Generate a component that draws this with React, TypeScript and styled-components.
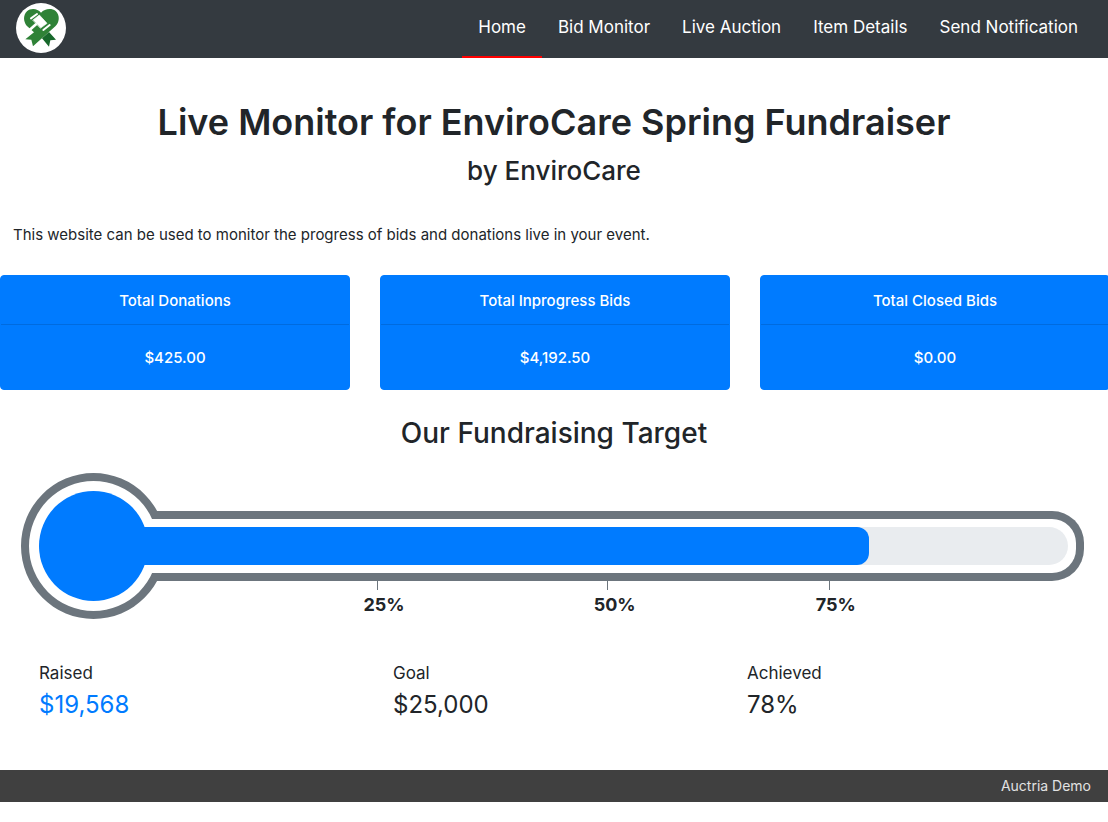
import React from 'react';
import styled, { createGlobalStyle } from 'styled-components';

const GlobalStyle = createGlobalStyle`
  *, *::before, *::after { box-sizing: border-box; }
  body {
    margin: 0;
    overflow-x: hidden;
    background: #fff;
    color: #212529;
    font-family: Inter, "Liberation Sans", sans-serif;
    font-size: 16px;
    line-height: 24px;
  }
  h1, h2, h3, p, dl, dt, dd { margin: 0; padding: 0; }
`;

const Header = styled.header`
  display: flex;
  align-items: stretch;
  justify-content: space-between;
  height: 58px;
  padding: 0 14px 0 16px;
  background: #343a40;
`;

const Brand = styled.a`
  display: block;
  padding-top: 3px;
  svg { display: block; }
`;

const Nav = styled.nav`
  display: flex;
`;

const NavLink = styled.a<{ $active?: boolean }>`
  padding: 15px 16px 0;
  border-bottom: 2px solid ${(p) => (p.$active ? '#f00' : 'transparent')};
  color: #fff;
  font-size: 17px;
  text-decoration: none;
  white-space: nowrap;
`;

const Title = styled.h1`
  margin-top: 40px;
  text-align: center;
  font-size: 36px;
  font-weight: 600;
  line-height: 48px;
`;

const Subtitle = styled.h2`
  margin-top: 8px;
  text-align: center;
  font-size: 26px;
  font-weight: 500;
  line-height: 34px;
`;

const Intro = styled.p`
  margin-top: 35px;
  padding: 0 13px;
  font-size: 15px;
`;

const Cards = styled.section`
  display: grid;
  grid-template-columns: repeat(3, 1fr);
  gap: 30px;
  margin: 28px -2px 0 0;
`;

const Card = styled.article`
  border: 1px solid #007bff;
  border-radius: 4px;
  background: #007bff;
  color: #fff;
  text-align: center;
  font-weight: 500;
`;

const CardHeader = styled.h3`
  padding: 13px 20px 11px;
  border-bottom: 1px solid rgba(0, 0, 0, 0.125);
  font-size: 15px;
  font-weight: 500;
`;

const CardBody = styled.p`
  padding: 21px 20px 19px;
  font-size: 15px;
`;

const TargetTitle = styled.h2`
  margin-top: 24px;
  text-align: center;
  font-size: 28px;
  font-weight: 500;
  line-height: 38px;
`;

const Thermometer = styled.section`
  padding: 21px 24px 0 21px;
`;

const Gauge = styled.div`
  display: flex;
  align-items: center;
`;

const Bulb = styled.div`
  flex: none;
  width: 145px;
  height: 146px;
  padding: 10px;
  border: 8px solid #6c757d;
  border-radius: 50%;
  background: #fff;
  &::before {
    content: '';
    display: block;
    height: 110px;
    border-radius: 50%;
    background: #007bff;
  }
`;

const Tube = styled.div`
  flex: 1;
  margin-left: -14px;
  padding: 8px 8px 8px 0;
  border: 8px solid #6c757d;
  border-left: 0;
  border-radius: 0 32px 32px 0;
  background: #fff;
`;

const Track = styled.div`
  height: 38px;
  border-radius: 0 19px 19px 0;
  background: #e9ecef;
`;

/* The left padding reaches back into the bulb so the liquid is continuous. */
const Fill = styled.div`
  box-sizing: content-box;
  height: 38px;
  margin-left: -12px;
  padding-left: 12px;
  border-radius: 0 12px 12px 0;
  background: #007bff;
`;

const Scale = styled.div`
  display: grid;
  grid-template-columns: 230fr 222fr 281fr;
  margin-top: -38px;
  padding-left: 31%;
`;

const Mark = styled.div`
  padding-left: 13px;
  font-size: 18px;
  font-weight: 700;
  line-height: 30px;
  &::before {
    content: '';
    display: block;
    width: 1px;
    height: 9px;
    margin-left: 13px;
    background: #6c757d;
  }
`;

const Stats = styled.dl`
  display: grid;
  grid-template-columns: repeat(3, 1fr);
  margin-top: 40px;
  padding: 0 7px 0 39px;
`;

const StatLabel = styled.dt`
  font-size: 17px;
  line-height: 26px;
`;

const StatValue = styled.dd<{ $accent?: boolean }>`
  color: ${(p) => (p.$accent ? '#007bff' : 'inherit')};
  font-size: 24px;
  line-height: 38px;
`;

const Footer = styled.footer`
  margin-top: 46px;
  padding: 0 17px;
  background: #404040;
  color: #e2e2e2;
  text-align: right;
  font-size: 14px;
  line-height: 32px;
`;

const Logo = () => (
  <svg width="50" height="50" viewBox="48 9 150 150" aria-hidden="true">
    <circle cx="123" cy="84" r="75" fill="#fff" />
    <path
      d="M123 38C112 24 91 24 81 34C69 46 70 64 80 77L102 97L76 118L94 119L99 139L166 79C178 68 181 46 167 33C154 23 134 26 123 38Z"
      fill="#2f8237"
    />
    <path d="M126 115L147 96L168 119L151 121L147 140Z" fill="#17682b" />
    <g fill="#fff" stroke="#fff" strokeLinecap="round" strokeLinejoin="round">
      <path d="M99 60L118 45L141 70L122 84Z" strokeWidth="2" />
      <path d="M108 73L76 101" strokeWidth="8" />
      <path d="M93 55L111 42" strokeWidth="6" />
      <path d="M130 90L149 75" strokeWidth="6" />
    </g>
  </svg>
);

const links = ['Home', 'Bid Monitor', 'Live Auction', 'Item Details', 'Send Notification'];

const totals = [
  { label: 'Total Donations', amount: '$425.00' },
  { label: 'Total Inprogress Bids', amount: '$4,192.50' },
  { label: 'Total Closed Bids', amount: '$0.00' },
];

const raised = 19568;
const goal = 25000;
const percent = (raised / goal) * 100;

export default function App() {
  return (
    <>
      <GlobalStyle />
      <Header>
        <Brand href="#" aria-label="EnviroCare">
          <Logo />
        </Brand>
        <Nav>
          {links.map((name, i) => (
            <NavLink key={name} href="#" $active={i === 0}>
              {name}
            </NavLink>
          ))}
        </Nav>
      </Header>
      <main>
        <Title>Live Monitor for EnviroCare Spring Fundraiser</Title>
        <Subtitle>by EnviroCare</Subtitle>
        <Intro>This website can be used to monitor the progress of bids and donations live in your event.</Intro>
        <Cards>
          {totals.map((t) => (
            <Card key={t.label}>
              <CardHeader>{t.label}</CardHeader>
              <CardBody>{t.amount}</CardBody>
            </Card>
          ))}
        </Cards>
        <TargetTitle>Our Fundraising Target</TargetTitle>
        <Thermometer>
          <Gauge role="progressbar" aria-label="Raised" aria-valuenow={Math.round(percent)}>
            <Bulb />
            <Tube>
              <Track>
                <Fill style={{ width: `${percent}%` }} />
              </Track>
            </Tube>
          </Gauge>
          <Scale>
            <Mark>25%</Mark>
            <Mark>50%</Mark>
            <Mark>75%</Mark>
          </Scale>
        </Thermometer>
        <Stats>
          <div>
            <StatLabel>Raised</StatLabel>
            <StatValue $accent>${raised.toLocaleString('en-US')}</StatValue>
          </div>
          <div>
            <StatLabel>Goal</StatLabel>
            <StatValue>${goal.toLocaleString('en-US')}</StatValue>
          </div>
          <div>
            <StatLabel>Achieved</StatLabel>
            <StatValue>{Math.round(percent)}%</StatValue>
          </div>
        </Stats>
      </main>
      <Footer>Auctria Demo</Footer>
    </>
  );
}
